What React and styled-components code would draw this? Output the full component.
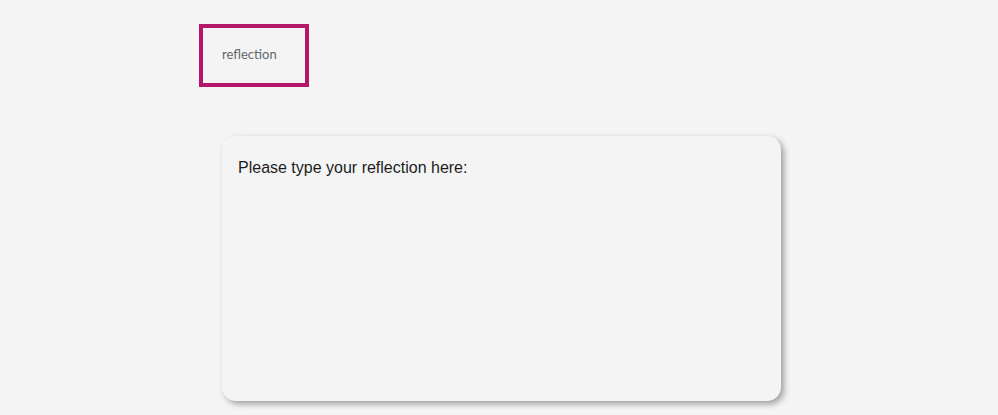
import React from "react";
import styled, { createGlobalStyle } from "styled-components";

const Global = createGlobalStyle`
  html, body { margin: 0; padding: 0; background: #f4f4f4; }
  body { font-family: "Liberation Sans", Arial, sans-serif; }
`;

const Page = styled.div`
  width: 998px;
  height: 415px;
  overflow: hidden;
  padding: 24px 0 0 199px;
  box-sizing: border-box;
`;

const Tag = styled.div`
  width: 110px;
  height: 63px;
  box-sizing: border-box;
  border: 4px solid #b5176b;
  padding: 18px 0 0 19px;
  font-family: Lato, "Open Sans", sans-serif;
  font-size: 13px;
  line-height: 16px;
  color: #62666c;
`;

const Card = styled.div`
  margin: 49px 0 0 23px;
  width: 559px;
  height: 265px;
  box-sizing: border-box;
  background: #f4f4f4;
  border-radius: 14px;
  box-shadow: 3px 3px 6px rgba(0, 0, 0, 0.35);
  padding: 22px 16px;
  font-size: 16px;
  line-height: 19px;
  color: #1c1c1c;
`;

export default function App() {
  return (
    <>
      <Global />
      <Page>
        <Tag>reflection</Tag>
        <Card>Please type your reflection here:</Card>
      </Page>
    </>
  );
}
